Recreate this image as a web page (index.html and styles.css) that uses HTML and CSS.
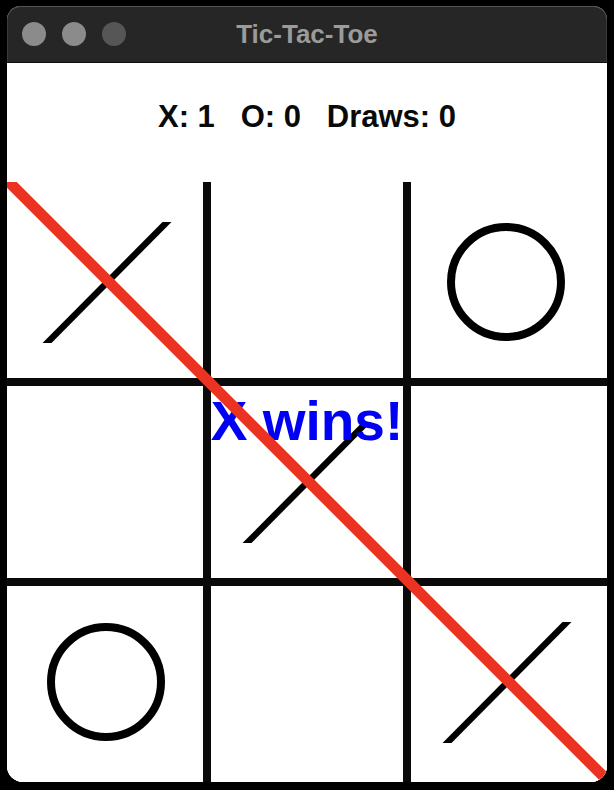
FILE: index.html
```html
<!DOCTYPE html>
<html lang="en">
<head>
<meta charset="utf-8">
<title>Tic-Tac-Toe</title>
<link rel="stylesheet" href="styles.css">
</head>
<body>
<div class="window">
  <div class="titlebar">
    <div class="lights">
      <span class="light"></span>
      <span class="light"></span>
      <span class="light dim"></span>
    </div>
    <div class="title">Tic-Tac-Toe</div>
    <div class="spacer"></div>
  </div>
  <div class="content">
    <div class="score">X: 1   O: 0   Draws: 0</div>
    <div class="board">
      <div class="cell"><svg class="mark" viewBox="0 0 200 200"><polygon class="x" points="35.5,161 44.5,161 164.5,40 155.5,40"/></svg></div>
      <div class="cell"></div>
      <div class="cell"><svg class="mark" viewBox="0 0 200 200"><circle class="o" cx="99" cy="100" r="55"/></svg></div>
      <div class="cell"></div>
      <div class="cell"><svg class="mark" viewBox="0 0 200 200"><polygon class="x" points="35.5,161 44.5,161 164.5,40 155.5,40"/></svg></div>
      <div class="cell"></div>
      <div class="cell"><svg class="mark" viewBox="0 0 200 200"><circle class="o" cx="99" cy="100" r="55"/></svg></div>
      <div class="cell"></div>
      <div class="cell"><svg class="mark" viewBox="0 0 200 200"><polygon class="x" points="35.5,161 44.5,161 164.5,40 155.5,40"/></svg></div>
      <div class="message">X wins!</div>
      <svg class="strike" viewBox="0 0 600 600"><line x1="0" y1="-2" x2="602" y2="600"/></svg>
    </div>
  </div>
</div>
</body>
</html>
```

FILE: styles.css
```css
html, body {
  margin: 0;
  padding: 0;
  background: #000;
}

body {
  width: 614px;
  height: 790px;
  overflow: hidden;
  padding-top: 6px;
  padding-left: 7px;
  box-sizing: border-box;
}

.window {
  width: 600px;
  border-radius: 14px 14px 16px 16px;
  overflow: hidden;
  background: #fff;
}

.titlebar {
  height: 56px;
  background: #262626;
  border-bottom: 1px solid #0e0e0e;
  box-shadow: inset 0 1px 0 #555, inset 1px 0 0 #3a3a3a, inset -1px 0 0 #3a3a3a;
  border-radius: 14px 14px 0 0;
  display: grid;
  grid-template-columns: 1fr auto 1fr;
  align-items: center;
}

.lights {
  display: flex;
  gap: 16px;
  padding-left: 15px;
}

.light {
  width: 24px;
  height: 24px;
  border-radius: 50%;
  background: #8b8b8b;
}

.light.dim {
  background: #565656;
}

.title {
  font-family: "Liberation Sans", Arial, sans-serif;
  font-weight: bold;
  font-size: 26px;
  color: #9b9b9b;
  line-height: 1;
}

.content {
  background: #fff;
}

.score {
  height: 119px;
  box-sizing: border-box;
  padding-top: 38px;
  font-family: "Liberation Sans", Arial, sans-serif;
  font-weight: bold;
  font-size: 31px;
  line-height: 31px;
  color: #0a0a0a;
  text-align: center;
  white-space: pre;
}

.board {
  position: relative;
  width: 600px;
  height: 600px;
  display: grid;
  grid-template-columns: repeat(3, 200px);
  grid-template-rows: repeat(3, 200px);
  background:
    linear-gradient(to right, transparent 196px, #0a0a0a 196px, #0a0a0a 204px, transparent 204px, transparent 396px, #0a0a0a 396px, #0a0a0a 404px, transparent 404px),
    linear-gradient(to bottom, transparent 196px, #0a0a0a 196px, #0a0a0a 204px, transparent 204px, transparent 396px, #0a0a0a 396px, #0a0a0a 404px, transparent 404px),
    #fff;
  overflow: hidden;
}

.cell {
  width: 200px;
  height: 200px;
}

.mark {
  display: block;
  width: 200px;
  height: 200px;
}

.mark .x {
  fill: #000;
}

.mark .o {
  fill: none;
  stroke: #000;
  stroke-width: 8;
}

.message {
  position: absolute;
  left: 0;
  right: 0;
  top: 212px;
  text-align: center;
  font-family: "Liberation Sans", Arial, sans-serif;
  font-weight: bold;
  font-size: 55px;
  line-height: 55px;
  color: #0000f5;
}

.strike {
  position: absolute;
  left: 0;
  top: 0;
  width: 600px;
  height: 600px;
}

.strike line {
  stroke: #ea3323;
  stroke-width: 11;
}
```
